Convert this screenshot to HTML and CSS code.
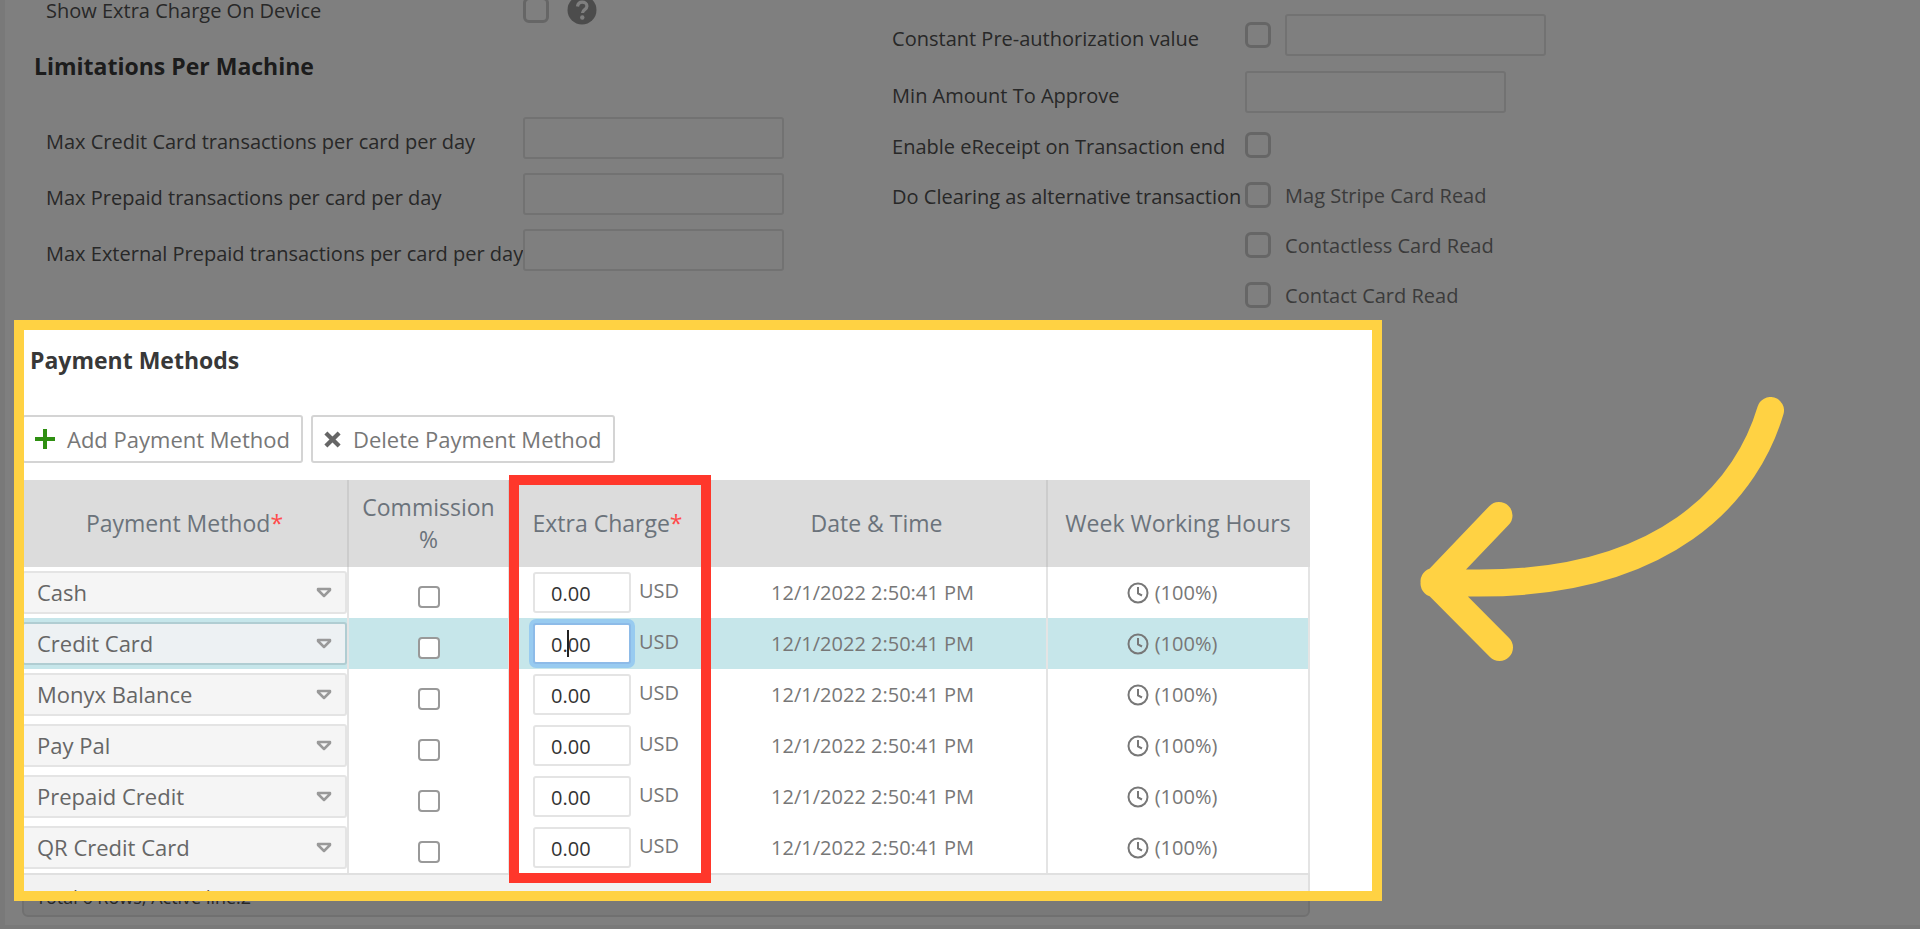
FILE: index.html
```html
<!DOCTYPE html>
<html lang="en">
<head>
    <meta charset="UTF-8">
    <title>Machine Settings - Payment Methods</title>
    <link rel="stylesheet" href="styles.css">
</head>
<body>
    <!-- shared icons -->
    <svg class="sprite" aria-hidden="true">
        <symbol id="icon-clock" viewBox="0 0 22 22">
            <circle cx="11" cy="11" r="9.500" fill="none" stroke="currentColor" stroke-width="2"/>
            <path d="M11 5v6.500l4 2" fill="none" stroke="currentColor" stroke-width="2"/>
        </symbol>
        <symbol id="icon-caret" viewBox="0 0 16 12">
            <path d="M2 2h12v1L8 9 2 3z" fill="none" stroke="currentColor" stroke-width="2.500" stroke-linejoin="round"/>
        </symbol>
    </svg>

    <main class="panel">
        <div class="settings">
            <div class="settings-col">
                <div class="field first">
                    <label for="show-extra">Show Extra Charge On Device</label>
                    <input type="checkbox" id="show-extra">
                    <svg class="help-icon" viewBox="0 0 30 30">
                        <circle cx="15" cy="15" r="14.500" fill="#999"/>
                        <path d="M10.500 11.500c.4-3 2.300-4.300 4.700-4.300 2.700 0 4.700 1.600 4.700 4 0 3.500-4.400 3.300-4.400 6.800" fill="none" stroke="#fff" stroke-width="3.200"/>
                        <circle cx="15.300" cy="22.500" r="2.200" fill="#fff"/>
                    </svg>
                </div>
                <h2>Limitations Per Machine</h2>
                <div class="field">
                    <label for="max-credit">Max Credit Card transactions per card per day</label>
                    <input type="text" id="max-credit">
                </div>
                <div class="field">
                    <label for="max-prepaid">Max Prepaid transactions per card per day</label>
                    <input type="text" id="max-prepaid">
                </div>
                <div class="field">
                    <label for="max-external">Max External Prepaid transactions per card per day</label>
                    <input type="text" id="max-external">
                </div>
            </div>

            <div class="settings-col right">
                <div class="field">
                    <label for="preauth">Constant Pre-authorization value</label>
                    <input type="checkbox" id="preauth">
                    <input type="text" aria-label="Pre-authorization value">
                </div>
                <div class="field">
                    <label for="min-amount">Min Amount To Approve</label>
                    <input type="text" id="min-amount">
                </div>
                <div class="field check">
                    <label for="ereceipt">Enable eReceipt on Transaction end</label>
                    <input type="checkbox" id="ereceipt">
                </div>
                <div class="field check">
                    <span class="label">Do Clearing as alternative transaction</span>
                    <input type="checkbox" id="mag">
                    <label class="option" for="mag">Mag Stripe Card Read</label>
                </div>
                <div class="field check">
                    <span class="label"></span>
                    <input type="checkbox" id="contactless">
                    <label class="option" for="contactless">Contactless Card Read</label>
                </div>
                <div class="field check">
                    <span class="label"></span>
                    <input type="checkbox" id="contact">
                    <label class="option" for="contact">Contact Card Read</label>
                </div>
            </div>
        </div>

        <section class="payment">
            <h2>Payment Methods</h2>
            <div class="toolbar">
                <button type="button" class="btn">
                    <svg viewBox="0 0 20 20" width="20" height="20"><path d="M10 0v20M0 10h20" stroke="#2f8f12" stroke-width="4"/></svg>
                    Add Payment Method
                </button>
                <button type="button" class="btn">
                    <svg viewBox="0 0 18 18" width="17" height="17"><path d="M2 2l14 14M16 2L2 16" stroke="#666" stroke-width="4.500"/></svg>
                    Delete Payment Method
                </button>
            </div>

            <div class="grid">
                <table>
                    <colgroup>
                        <col class="c-method"><col class="c-commission"><col class="c-charge"><col class="c-date"><col class="c-hours">
                    </colgroup>
                    <thead>
                        <tr>
                            <th>Payment Method<em>*</em></th>
                            <th>Commission %</th>
                            <th>Extra Charge<em>*</em></th>
                            <th>Date &amp; Time</th>
                            <th>Week Working Hours</th>
                        </tr>
                    </thead>
                    <tbody>
                        <tr>
                            <td><div class="select"><select aria-label="Payment method"><option>Cash</option></select><svg><use href="#icon-caret"/></svg></div></td>
                            <td><input type="checkbox" aria-label="Commission"></td>
                            <td><div class="charge"><input type="text" value="0.00" aria-label="Extra charge"><span>USD</span></div></td>
                            <td class="date">12/1/2022 2:50:41 PM</td>
                            <td><div class="hours"><svg><use href="#icon-clock"/></svg>(100%)</div></td>
                        </tr>
                        <tr class="active">
                            <td><div class="select"><select aria-label="Payment method"><option>Credit Card</option></select><svg><use href="#icon-caret"/></svg></div></td>
                            <td><input type="checkbox" aria-label="Commission"></td>
                            <td><div class="charge"><input type="text" value="0.00" aria-label="Extra charge"><i class="cursor"></i><span>USD</span></div></td>
                            <td class="date">12/1/2022 2:50:41 PM</td>
                            <td><div class="hours"><svg><use href="#icon-clock"/></svg>(100%)</div></td>
                        </tr>
                        <tr>
                            <td><div class="select"><select aria-label="Payment method"><option>Monyx Balance</option></select><svg><use href="#icon-caret"/></svg></div></td>
                            <td><input type="checkbox" aria-label="Commission"></td>
                            <td><div class="charge"><input type="text" value="0.00" aria-label="Extra charge"><span>USD</span></div></td>
                            <td class="date">12/1/2022 2:50:41 PM</td>
                            <td><div class="hours"><svg><use href="#icon-clock"/></svg>(100%)</div></td>
                        </tr>
                        <tr>
                            <td><div class="select"><select aria-label="Payment method"><option>Pay Pal</option></select><svg><use href="#icon-caret"/></svg></div></td>
                            <td><input type="checkbox" aria-label="Commission"></td>
                            <td><div class="charge"><input type="text" value="0.00" aria-label="Extra charge"><span>USD</span></div></td>
                            <td class="date">12/1/2022 2:50:41 PM</td>
                            <td><div class="hours"><svg><use href="#icon-clock"/></svg>(100%)</div></td>
                        </tr>
                        <tr>
                            <td><div class="select"><select aria-label="Payment method"><option>Prepaid Credit</option></select><svg><use href="#icon-caret"/></svg></div></td>
                            <td><input type="checkbox" aria-label="Commission"></td>
                            <td><div class="charge"><input type="text" value="0.00" aria-label="Extra charge"><span>USD</span></div></td>
                            <td class="date">12/1/2022 2:50:41 PM</td>
                            <td><div class="hours"><svg><use href="#icon-clock"/></svg>(100%)</div></td>
                        </tr>
                        <tr>
                            <td><div class="select"><select aria-label="Payment method"><option>QR Credit Card</option></select><svg><use href="#icon-caret"/></svg></div></td>
                            <td><input type="checkbox" aria-label="Commission"></td>
                            <td><div class="charge"><input type="text" value="0.00" aria-label="Extra charge"><span>USD</span></div></td>
                            <td class="date">12/1/2022 2:50:41 PM</td>
                            <td><div class="hours"><svg><use href="#icon-clock"/></svg>(100%)</div></td>
                        </tr>
                    </tbody>
                </table>
                <div class="grid-footer">Total 6 Rows, Active line:2</div>
            </div>

            <!-- guide overlay: dims everything outside the box -->
            <div class="spotlight"></div>
            <div class="column-mark"></div>
            <svg class="arrow" viewBox="0 0 364 264">
                <path d="M350.500 13.500C330 83 255 201 14 184.500M79 118.500L14 186.500M14 184.500L79.500 250.500" fill="none" stroke="#ffd243" stroke-width="27" stroke-linecap="round" stroke-linejoin="round"/>
            </svg>
        </section>
    </main>
</body>
</html>
```
FILE: styles.css
```css
* {
    box-sizing: border-box;
}
body {
    margin: 0;
    padding: 0 0 4px 5px;
    background: #f2f2f2;
    color: #505050;
    font-family: "Open Sans", "Noto Sans", sans-serif;
    font-size: 20px;
    overflow: hidden;
}
.sprite {
    position: absolute;
    width: 0;
    height: 0;
}
.panel {
    background: #fff;
    padding: 0 0 8px 17px;
}
h2 {
    margin: 0;
    color: #383838;
    font-size: 23px;
    line-height: 30px;
}

/* settings form */
.settings {
    display: grid;
    grid-template-columns: 45% 1fr;
    column-gap: 16px;
    height: 320px;
}
.settings h2 {
    margin: 31px 0 36px 12px;
}
.field {
    display: flex;
    align-items: center;
    gap: 14px;
    height: 42px;
    margin-bottom: 14px;
    padding-left: 24px;
    white-space: nowrap;
}
.field.first {
    height: 20px;
    margin: 0;
}
.field label:first-child,
.field .label {
    width: 477px;
    margin-right: -14px;
    padding-top: 6px;
}
.field.first label:first-child {
    padding-top: 0;
}
.right {
    padding-top: 14px;
}
.right .field {
    padding-left: 0;
    margin-bottom: 15px;
}
.right .field label:first-child,
.right .field .label {
    width: 353px;
}
.right .field.check {
    height: 50px;
    margin: 0;
}
.right .field.check label:first-child,
.right .check .label {
    padding-top: 3px;
}
.right .check:nth-child(3) {
    margin-top: -8px;
}
.field .option {
    color: #777;
}
input[type="text"] {
    width: 261px;
    height: 42px;
    border: 2px solid #e4e4e4;
    border-radius: 3px;
    background: #fff;
    color: #333;
    font: inherit;
    outline: none;
}
input[type="checkbox"] {
    appearance: none;
    width: 26px;
    height: 26px;
    margin: 0;
    border: 3px solid #ccc;
    border-radius: 6px;
    background: #fff;
}
.help-icon {
    width: 30px;
    height: 30px;
    margin-left: 4px;
}

/* payment methods */
.payment {
    position: relative;
    max-width: 1368px;
    margin-left: -8px;
    padding: 25px 72px 0 8px;
}
.payment h2 {
    margin: 0 0 40px 8px;
}
.toolbar {
    display: flex;
    gap: 8px;
    margin-bottom: 17px;
}
.btn {
    display: flex;
    align-items: center;
    gap: 12px;
    height: 48px;
    padding: 0 11px;
    border: 2px solid #d4d4d4;
    border-radius: 3px;
    background: #fff;
    color: #777;
    font: inherit;
    font-size: 22px;
}
table {
    width: 100%;
    table-layout: fixed;
    border-collapse: separate;
    border-spacing: 0;
}
.c-method { width: 327px; }
.c-commission { width: 161px; }
.c-charge { width: 197px; }
.c-date { width: 341px; }
th {
    height: 87px;
    padding: 0 12px 2px;
    border-right: 2px solid #ccc;
    background: #dcdcdc;
    color: #6b737b;
    font-size: 23px;
    font-weight: normal;
    line-height: 32px;
}
th:last-child {
    border-color: #dcdcdc;
}
th em {
    color: #ff4b4b;
    font-style: normal;
}
td {
    height: 51px;
    padding: 0;
    border-right: 2px solid #e4e4e4;
    color: #777;
    text-align: center;
}
td:nth-child(3) {
    border-right: 0;
}
.active td {
    background: #c6e6ea;
}
td.date {
    padding-right: 8px;
}
td input[type="checkbox"] {
    width: 22px;
    height: 22px;
    margin-top: 14px;
    border: 2px solid #999;
    border-radius: 4px;
}
.select {
    position: relative;
}
.select select {
    display: block;
    appearance: none;
    width: 100%;
    height: 43px;
    padding: 0 13px 2px;
    border: 2px solid #e4e4e4;
    border-radius: 3px;
    background: #f5f5f5;
    color: #666;
    font: inherit;
    font-size: 22px;
}
.active .select select {
    border-color: #b0cdd2;
    background: #edf1f3;
}
.select svg {
    position: absolute;
    top: 16px;
    right: 15px;
    width: 16px;
    height: 12px;
    color: #999;
}
.charge {
    position: relative;
    display: flex;
    align-items: center;
    gap: 8px;
    padding-left: 23px;
}
.charge input[type="text"] {
    width: 98px;
    height: 41px;
    padding: 2px 16px 0;
}
.charge span {
    padding-bottom: 4px;
}
.active .charge input[type="text"] {
    border-color: #8dbbe8;
    box-shadow: 0 0 0 4px #98cbf0;
}
.cursor {
    position: absolute;
    top: 7px;
    left: 57px;
    width: 2px;
    height: 27px;
    background: #222;
}
.hours {
    display: flex;
    align-items: center;
    justify-content: center;
    gap: 6px;
    padding-right: 12px;
}
.hours svg {
    width: 22px;
    height: 22px;
}
.grid-footer {
    height: 44px;
    padding: 9px 12px;
    border: 2px solid #e0e0e0;
    border-radius: 0 0 6px 6px;
    background: #f2f2f2;
    font-size: 18px;
    line-height: 26px;
}

/* guide overlay */
.spotlight {
    position: absolute;
    top: 0;
    left: 0;
    right: 0;
    height: 581px;
    border: 10px solid #ffd243;
    box-shadow: 0 0 0 9999px rgba(0, 0, 0, 0.5);
    pointer-events: none;
}
.column-mark {
    position: absolute;
    top: 155px;
    left: 495px;
    width: 202px;
    height: 408px;
    border: 10px solid #ff372b;
    pointer-events: none;
}
.arrow {
    position: absolute;
    top: 77px;
    left: calc(100% + 38px);
    width: 364px;
    height: 264px;
}
```
